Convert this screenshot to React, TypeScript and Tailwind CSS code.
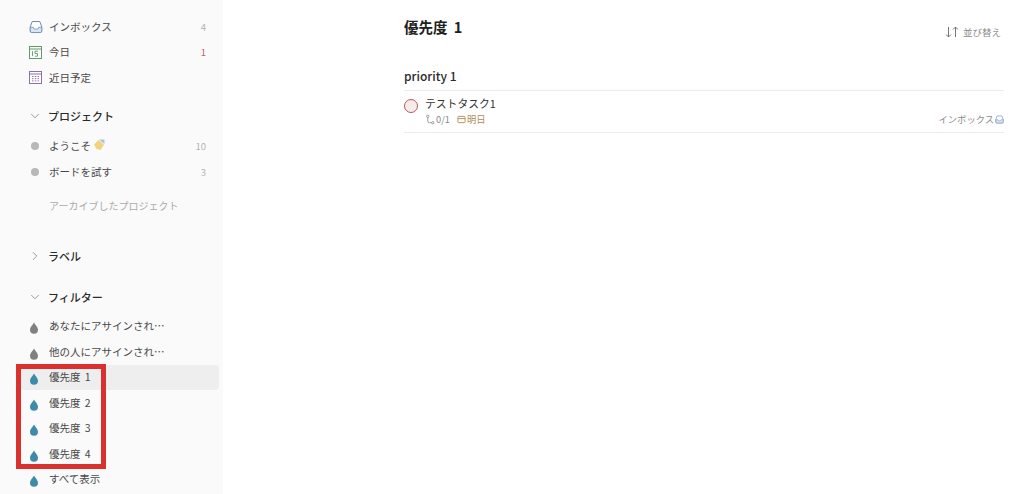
import { ChevronDown, ChevronRight } from "lucide-react";

const FONT = "font-['Noto_Sans_CJK_JP','Liberation_Sans',sans-serif]";

function InboxIcon({ className }: { className?: string }) {
  return (
    <svg viewBox="0 0 14 14" fill="none" className={className}>
      <path d="M3.200 1.500h7.600l2 5.600v3.900a1.500 1.500 0 0 1-1.500 1.500h-8.600a1.500 1.500 0 0 1-1.500-1.500V7.100z" fill="#fff" stroke="#6c8fb5" strokeWidth="1" />
      <path d="M1.300 7.300h3l1 1.700h3.400l1-1.700h3v3.700a1.500 1.500 0 0 1-1.500 1.500h-8.400a1.500 1.500 0 0 1-1.500-1.500z" fill="#d8e6f3" stroke="#6c8fb5" strokeWidth="0.800" />
    </svg>
  );
}

function TodayIcon() {
  return (
    <svg viewBox="0 0 13 13" className="h-[13px] w-[13px]" fill="none">
      <rect x="0.500" y="0.500" width="12" height="12" fill="#fff" stroke="#5f9a6c" />
      <path d="M0.500 3h12" stroke="#5f9a6c" />
      <path d="M3.500 5.200v5M6 5.200H9M6 5.200v2.300h2.500v2.700H6" stroke="#5f9a6c" strokeWidth="0.900" />
    </svg>
  );
}

function UpcomingIcon() {
  return (
    <svg viewBox="0 0 13 13" className="h-[13px] w-[13px]" fill="none">
      <rect x="0.500" y="0.500" width="12" height="12" fill="#fff" stroke="#8d72a8" />
      <path d="M0.500 3h12" stroke="#8d72a8" />
      <path d="M3 5.500h1.500M5.800 5.500h1.500M8.600 5.500h1.500M3 7.700h1.500M5.800 7.700h1.500M8.600 7.700h1.500M3 9.900h1.500M5.800 9.900h1.500M8.600 9.900h1.500" stroke="#8d72a8" />
    </svg>
  );
}

function Drop({ color }: { color: string }) {
  return (
    <svg viewBox="0 0 10 12" className="mt-[4px] h-[12px] w-[10px]">
      <path d="M5 0.500C5.800 2.500 9 5 9 7.800a4 4 0 0 1-8 0C1 5 4.200 2.500 5 0.500z" fill={color} />
    </svg>
  );
}

function Sparkle() {
  return (
    <svg viewBox="0 0 11 11" className="ml-[2px] mt-[-2px] h-[12px] w-[12px]">
      <path d="M1 5l4-4 5 4-3 5-4-1z" fill="#f2d27c" />
      <path d="M5.500 0.500L10.500 0.500v4z" fill="#a9c3d6" />
    </svg>
  );
}

function NavRow({
  icon,
  label,
  count,
  countClass = "text-[#b4b4b4]",
  active,
  className = "",
}: {
  icon: React.ReactNode;
  label: React.ReactNode;
  count?: string;
  countClass?: string;
  active?: boolean;
  className?: string;
}) {
  return (
    <div
      className={`flex h-[25.500px] items-center rounded-[4px] pl-[9px] pr-[13px] ${active ? "bg-[#eeeeee]" : ""} ${className}`}
    >
      <span className="flex w-[20px] shrink-0 items-center justify-start">{icon}</span>
      <span className="flex-1 truncate text-[10.500px] text-[#484848] [word-spacing:2px]">{label}</span>
      {count && <span className={`text-[9.500px] ${countClass}`}>{count}</span>}
    </div>
  );
}

function SectionHeader({ open, label, className = "" }: { open: boolean; label: string; className?: string }) {
  const Icon = open ? ChevronDown : ChevronRight;
  return (
    <div className={`flex h-[25px] items-center pl-[8px] ${className}`}>
      <span className="flex w-[20px] shrink-0">
        <Icon size={14} strokeWidth={1} className="text-[#555555]" />
      </span>
      <span className="text-[11px] font-medium text-[#2a2a2a]">{label}</span>
    </div>
  );
}

function Dot() {
  return <span className="ml-[2px] h-[8px] w-[8px] rounded-full bg-[#b8b8b8]" />;
}

export default function App() {
  return (
    <div className={`relative flex h-[494px] w-[1013px] overflow-hidden bg-white ${FONT}`}>
      <aside className="flex w-[223px] shrink-0 flex-col bg-[#fafafa] pl-[20px] pr-[4px] pt-[14px]">
        <NavRow icon={<InboxIcon className="h-[14px] w-[14px]" />} label="インボックス" count="4" />
        <NavRow icon={<TodayIcon />} label="今日" count="1" countClass="text-[#c0636a]" />
        <NavRow icon={<UpcomingIcon />} label="近日予定" />
        <SectionHeader open label="プロジェクト" className="mt-[13px]" />
        <NavRow
          className="mt-[5px]"
          icon={<Dot />}
          label={
            <span className="flex items-center">
              ようこそ
              <Sparkle />
            </span>
          }
          count="10"
        />
        <NavRow icon={<Dot />} label="ボードを試す" count="3" />
        <div className="mt-[8px] flex h-[26px] items-center pl-[29px] text-[10px] text-[#ababab]">
          アーカイブしたプロジェクト
        </div>
        <SectionHeader open={false} label="ラベル" className="mt-[25px]" />
        <SectionHeader open label="フィルター" className="mt-[16px]" />
        <div className="mt-[4px]">
          <NavRow icon={<Drop color="#808080" />} label="あなたにアサインされ…" />
          <NavRow icon={<Drop color="#808080" />} label="他の人にアサインされ…" />
          <NavRow active icon={<Drop color="#3f8aa8" />} label="優先度 1" />
          <NavRow icon={<Drop color="#3f8aa8" />} label="優先度 2" />
          <NavRow icon={<Drop color="#3f8aa8" />} label="優先度 3" />
          <NavRow icon={<Drop color="#3f8aa8" />} label="優先度 4" />
          <NavRow icon={<Drop color="#3f8aa8" />} label="すべて表示" />
        </div>
      </aside>

      <main className="flex-1 pl-[181px] pr-[9px] pt-[15px]">
        <div className="flex items-start justify-between">
          <h1 className="text-[14.500px] font-bold leading-[24px] text-[#202020] [word-spacing:3px]">
            優先度 1
          </h1>
          <div className="mt-[10px] flex items-center gap-[4px] pr-[3px] text-[9.500px] text-[#8a8a8a]">
            <svg viewBox="0 0 14 12" className="h-[12px] w-[14px]" fill="none" stroke="#777777" strokeWidth="1">
              <path d="M3.500 1v10M1 8.500l2.500 2.500L6 8.500M10.500 11V1M8 3.500L10.500 1 13 3.500" />
            </svg>
            並び替え
          </div>
        </div>
        <div className="mt-[29px] border-b border-[#ececec] pb-[6px] text-[12px] font-medium leading-[16px] text-[#2a2a2a]">
          priority 1
        </div>
        <div className="flex h-[42px] border-b border-[#ececec] pt-[5px]">
          <span className="mt-[3px] h-[14px] w-[14px] shrink-0 rounded-full border border-[#a8605f] bg-[#faeaea]" />
          <div className="ml-[7px] flex-1">
            <div className="text-[10.800px] leading-[15px] text-[#333333]">テストタスク1</div>
            <div className="mt-[2px] flex items-center justify-between text-[9.300px] leading-[13px]">
              <div className="flex items-center">
                <svg viewBox="0 0 12 12" className="h-[11px] w-[11px]" fill="none" stroke="#8a8a8a" strokeWidth="0.900">
                  <circle cx="3" cy="2.500" r="1.300" />
                  <circle cx="8.500" cy="9.500" r="1.300" />
                  <path d="M3 4v3.500a2 2 0 0 0 2 2h2" />
                </svg>
                <span className="text-[#8a8a8a]">0/1</span>
                <span className="ml-[7px] flex items-center gap-[1px] text-[#ad8a55]">
                  <svg viewBox="0 0 10 10" className="h-[9px] w-[9px]" fill="none" stroke="#ad8a55" strokeWidth="1">
                    <rect x="1" y="1.500" width="8" height="7" rx="1" />
                    <path d="M1 4h8" />
                  </svg>
                  明日
                </span>
              </div>
              <div className="flex items-center text-[#8a8a8a]">
                インボックス
                <InboxIcon className="ml-[1px] h-[9px] w-[9px]" />
              </div>
            </div>
          </div>
        </div>
      </main>

      {/* annotation box drawn over the screenshot */}
      <div className="pointer-events-none absolute left-[16px] top-[364px] h-[105px] w-[90px] border-[5px] border-[#d9322e]" />
    </div>
  );
}
